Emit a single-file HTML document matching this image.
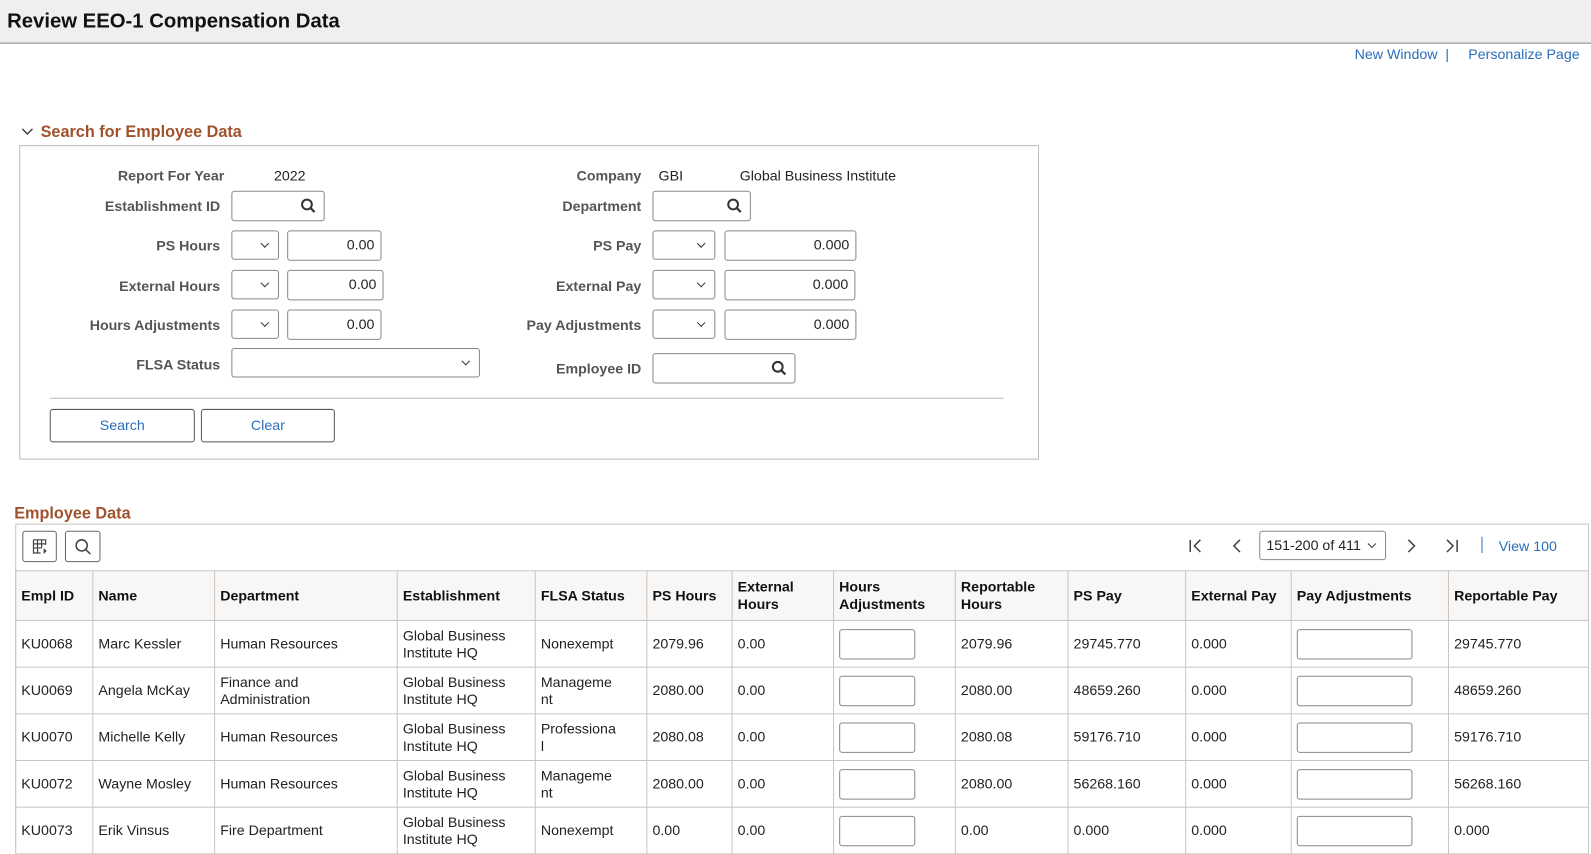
<!DOCTYPE html>
<html><head><meta charset="utf-8"><style>
*{box-sizing:border-box;margin:0;padding:0}
body{width:1591px;height:827px;overflow:hidden;background:#fff;font-family:"Liberation Sans",Arial,sans-serif;font-size:14px;color:#222;position:relative}
#w{position:absolute;left:0;top:0;width:1568px;height:815px;transform:scale(1.0147);transform-origin:0 0}
.a{position:absolute}
.hdr{left:0;top:0;width:1568px;height:43px;background:#f0efed;border-bottom:1px solid #8a8886}
.hdr h1{position:absolute;left:7px;top:10px;font-size:20px;font-weight:bold;color:#111}
.lnk{color:#2a6ebb;font-size:14px}
.sec{color:#a0522d;font-weight:bold;font-size:16px}
.lbl{font-weight:bold;color:#555;font-size:14px;text-align:right}
.inp{border:1px solid #888;border-radius:3px;background:#fff;height:30px}
.sel{border:1px solid #888;border-radius:3px;background:#fff;height:29px}
.sel:after{content:"";position:absolute;right:10px;top:9px;width:5px;height:5px;border-right:1.5px solid #333;border-bottom:1.5px solid #333;transform:rotate(45deg)}
.num{text-align:right;padding-right:6px;line-height:27px}
.mag{position:absolute;right:7px;top:6px}
.btn{border:1px solid #555;border-radius:3px;background:#fff;color:#2a6ebb;text-align:center;line-height:31px;height:33px}
table{border-collapse:collapse;table-layout:fixed;position:absolute;left:15px;top:562px}
td,th{border:1px solid #c8c5c2;padding:0 5px;text-align:left;vertical-align:middle;font-size:14px;line-height:17px}
th{background:#f8f7f6;height:49px;font-weight:bold;color:#111}
td{height:46px;background:#fff;color:#222}
.ti{display:block;width:75px;height:30px;border:1px solid #888;border-radius:3px}
.ti2{display:block;width:114px;height:30px;border:1px solid #888;border-radius:3px}
</style></head><body><div id="w">
<div class="a hdr"><h1>Review EEO-1 Compensation Data</h1></div>
<div class="a lnk" style="left:1335px;top:45px">New Window <span style="color:#2a6ebb">&nbsp;|</span></div>
<div class="a lnk" style="left:1447px;top:45px">Personalize Page</div>

<svg class="a" style="left:21px;top:125px" width="12" height="10"><path d="M1 2 L6 7 L11 2" fill="none" stroke="#444" stroke-width="1.5"/></svg>
<div class="a sec" style="left:40px;top:122px">Search for Employee Data</div>
<div class="a" style="left:19px;top:143px;width:1005px;height:310px;border:1px solid #bbb"></div>

<div class="a lbl" style="left:60px;top:165px;width:161px">Report For Year</div>
<div class="a" style="left:270px;top:165px">2022</div>
<div class="a lbl" style="left:60px;top:195px;width:157px">Establishment ID</div>
<div class="a inp" style="left:228px;top:188px;width:92px"><svg class="mag" width="16" height="16"><circle cx="6.5" cy="6.5" r="4.8" fill="none" stroke="#333" stroke-width="2"/><path d="M10 10 L14 14" stroke="#333" stroke-width="2.2"/></svg></div>
<div class="a lbl" style="left:60px;top:234px;width:157px">PS Hours</div>
<div class="a sel" style="left:228px;top:227px;width:47px"></div>
<div class="a inp num" style="left:283px;top:227px;width:93px">0.00</div>
<div class="a lbl" style="left:60px;top:274px;width:157px">External Hours</div>
<div class="a sel" style="left:228px;top:266px;width:47px"></div>
<div class="a inp num" style="left:283px;top:266px;width:95px">0.00</div>
<div class="a lbl" style="left:40px;top:312px;width:177px">Hours Adjustments</div>
<div class="a sel" style="left:228px;top:305px;width:47px"></div>
<div class="a inp num" style="left:283px;top:305px;width:93px">0.00</div>
<div class="a lbl" style="left:60px;top:351px;width:157px">FLSA Status</div>
<div class="a sel" style="left:228px;top:343px;width:245px"></div>

<div class="a lbl" style="left:480px;top:165px;width:152px">Company</div>
<div class="a" style="left:649px;top:165px">GBI</div>
<div class="a" style="left:729px;top:165px">Global Business Institute</div>
<div class="a lbl" style="left:480px;top:195px;width:152px">Department</div>
<div class="a inp" style="left:643px;top:188px;width:97px"><svg class="mag" width="16" height="16"><circle cx="6.5" cy="6.5" r="4.8" fill="none" stroke="#333" stroke-width="2"/><path d="M10 10 L14 14" stroke="#333" stroke-width="2.2"/></svg></div>
<div class="a lbl" style="left:480px;top:234px;width:152px">PS Pay</div>
<div class="a sel" style="left:643px;top:227px;width:62px"></div>
<div class="a inp num" style="left:714px;top:227px;width:130px">0.000</div>
<div class="a lbl" style="left:480px;top:274px;width:152px">External Pay</div>
<div class="a sel" style="left:643px;top:266px;width:62px"></div>
<div class="a inp num" style="left:714px;top:266px;width:129px">0.000</div>
<div class="a lbl" style="left:480px;top:312px;width:152px">Pay Adjustments</div>
<div class="a sel" style="left:643px;top:305px;width:62px"></div>
<div class="a inp num" style="left:714px;top:305px;width:130px">0.000</div>
<div class="a lbl" style="left:480px;top:355px;width:152px">Employee ID</div>
<div class="a inp" style="left:643px;top:348px;width:141px"><svg class="mag" width="16" height="16"><circle cx="6.5" cy="6.5" r="4.8" fill="none" stroke="#333" stroke-width="2"/><path d="M10 10 L14 14" stroke="#333" stroke-width="2.2"/></svg></div>

<div class="a" style="left:49px;top:392px;width:940px;border-top:1px solid #bbb"></div>
<div class="a btn" style="left:49px;top:403px;width:143px">Search</div>
<div class="a btn" style="left:198px;top:403px;width:132px">Clear</div>

<div class="a sec" style="left:14px;top:498px">Employee Data</div>
<div class="a" style="left:15px;top:516px;width:1551px;height:320px;border:1px solid #c8c5c2"></div>
<div class="a" style="left:22px;top:523px;width:34px;height:31px;border:1px solid #666;border-radius:3px"><svg class="a" style="left:9px;top:7px" width="16" height="16"><path d="M1 1H13V6M1 1V14H8M1 5H13M1 9H9M5 1V14M9 1V9" fill="none" stroke="#444" stroke-width="1.2"/><path d="M11 9L14 12L11 15Z" fill="#444"/></svg></div>
<div class="a" style="left:64px;top:523px;width:35px;height:31px;border:1px solid #666;border-radius:3px"><svg class="a" style="left:8px;top:6px" width="18" height="18"><circle cx="7.5" cy="7.5" r="5.5" fill="none" stroke="#444" stroke-width="1.5"/><path d="M11.5 11.5L16 16" stroke="#444" stroke-width="1.5"/></svg></div>

<svg class="a" style="left:1171px;top:530px" width="16" height="16"><path d="M2 2V14M12 2L6 8L12 14" fill="none" stroke="#444" stroke-width="1.5"/></svg>
<svg class="a" style="left:1212px;top:530px" width="16" height="16"><path d="M10 2L4 8L10 14" fill="none" stroke="#444" stroke-width="1.5"/></svg>
<div class="a sel" style="left:1241px;top:523px;width:125px;height:29px;line-height:27px;padding-left:6px">151-200 of 411</div>
<svg class="a" style="left:1384px;top:530px" width="16" height="16"><path d="M4 2L10 8L4 14" fill="none" stroke="#444" stroke-width="1.5"/></svg>
<svg class="a" style="left:1423px;top:530px" width="16" height="16"><path d="M3 2L9 8L3 14M13 2V14" fill="none" stroke="#444" stroke-width="1.5"/></svg>
<div class="a" style="left:1460px;top:529px;height:16px;border-left:1.5px solid #2a6ebb"></div>
<div class="a lnk" style="left:1477px;top:530px">View 100</div>

<table>
<colgroup><col style="width:76px"><col style="width:120px"><col style="width:180px"><col style="width:136px"><col style="width:110px"><col style="width:84px"><col style="width:100px"><col style="width:120px"><col style="width:111px"><col style="width:116px"><col style="width:104px"><col style="width:155px"><col style="width:138px"></colgroup>
<tr><th>Empl ID</th><th>Name</th><th>Department</th><th>Establishment</th><th>FLSA Status</th><th>PS Hours</th><th>External Hours</th><th>Hours Adjustments</th><th>Reportable Hours</th><th>PS Pay</th><th>External Pay</th><th>Pay Adjustments</th><th>Reportable Pay</th></tr>
<tr><td>KU0068</td><td>Marc Kessler</td><td>Human Resources</td><td>Global Business Institute HQ</td><td>Nonexempt</td><td>2079.96</td><td>0.00</td><td><span class="ti"></span></td><td>2079.96</td><td>29745.770</td><td>0.000</td><td><span class="ti2"></span></td><td>29745.770</td></tr>
<tr><td>KU0069</td><td>Angela McKay</td><td>Finance and<br>Administration</td><td>Global Business Institute HQ</td><td>Manageme<br>nt</td><td>2080.00</td><td>0.00</td><td><span class="ti"></span></td><td>2080.00</td><td>48659.260</td><td>0.000</td><td><span class="ti2"></span></td><td>48659.260</td></tr>
<tr><td>KU0070</td><td>Michelle Kelly</td><td>Human Resources</td><td>Global Business Institute HQ</td><td>Professiona<br>l</td><td>2080.08</td><td>0.00</td><td><span class="ti"></span></td><td>2080.08</td><td>59176.710</td><td>0.000</td><td><span class="ti2"></span></td><td>59176.710</td></tr>
<tr><td>KU0072</td><td>Wayne Mosley</td><td>Human Resources</td><td>Global Business Institute HQ</td><td>Manageme<br>nt</td><td>2080.00</td><td>0.00</td><td><span class="ti"></span></td><td>2080.00</td><td>56268.160</td><td>0.000</td><td><span class="ti2"></span></td><td>56268.160</td></tr>
<tr><td>KU0073</td><td>Erik Vinsus</td><td>Fire Department</td><td>Global Business Institute HQ</td><td>Nonexempt</td><td>0.00</td><td>0.00</td><td><span class="ti"></span></td><td>0.00</td><td>0.000</td><td>0.000</td><td><span class="ti2"></span></td><td>0.000</td></tr>
</table>
</div></body></html>
